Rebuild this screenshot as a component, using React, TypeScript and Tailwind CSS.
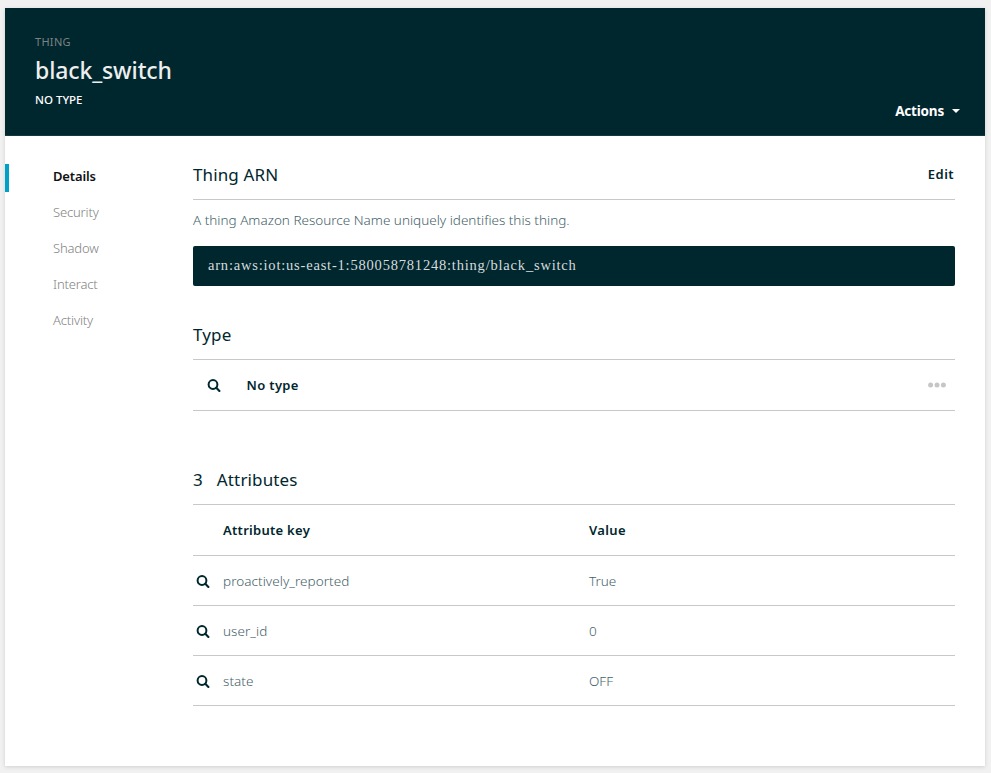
import type { ReactNode } from "react";

const navItems = ["Security", "Shadow", "Interact", "Activity"];

const attributes = [
  { key: "proactively_reported", value: "True" },
  { key: "user_id", value: "0" },
  { key: "state", value: "OFF" },
];

function SearchIcon() {
  return (
    <svg viewBox="0 0 14 13" className="block h-[13px] w-3.5" fill="none" stroke="currentColor">
      <circle cx="6" cy="5.5" r="4.4" strokeWidth="2" />
      <path d="M9.3 8.8 12.4 11.9" strokeWidth="2.1" strokeLinecap="round" />
    </svg>
  );
}

function SectionTitle({ children, action }: { children: ReactNode; action?: ReactNode }) {
  return (
    <div className="flex h-[50px] items-center justify-between border-b border-[#c8c8c8]">
      <h2 className="text-[17px] tracking-[0.13px]">{children}</h2>
      {action}
    </div>
  );
}

export default function App() {
  return (
    <div className="h-[773px] w-full bg-[#f1f1f1] pt-2 pr-1.5 pl-[5px] font-['Noto_Sans','Open_Sans',sans-serif] text-[#00262e]">
      <div className="h-[758px] bg-white shadow-[0_1px_4px_rgba(0,0,0,0.14)]">
        <header className="flex h-32 justify-between border-b border-[#16393f] bg-[#00262e] px-[30px] text-white">
          <div className="pt-[26px]">
            <div className="text-[11px] leading-4 tracking-[0.3px] text-[#7b8384]">THING</div>
            <h1 className="mt-[5px] text-[23px] leading-[30px] font-medium tracking-[-0.12px] text-[#eeeeee]">black_switch</h1>
            <div className="mt-[7px] text-[11.5px] leading-4 font-medium tracking-[0px]">NO TYPE</div>
          </div>
          <button className="mt-[93px] mr-[-5px] flex h-5 items-center text-[13.5px] font-bold tracking-[-0.2px]">
            Actions
            <svg viewBox="0 0 8 4" className="ml-2 h-1 w-2" fill="currentColor">
              <path d="M0 0h8L4 4z" />
            </svg>
          </button>
        </header>

        <div className="flex">
          <nav className="w-[188px] pt-7 text-[13px] tracking-[-0.15px]">
            <div className="flex h-7 items-center border-l-4 border-[#00a1c9] pb-[3px] pl-11 font-semibold text-[#111111]">Details</div>
            {navItems.map((item) => (
              <div key={item} className="mt-2 flex h-7 items-center pb-[3px] pl-12 font-light text-[#828282]">
                {item}
              </div>
            ))}
          </nav>

          <main className="w-[762px] pt-3.5">
            <SectionTitle action={<button className="mr-px text-[13px] font-semibold tracking-[0.45px]">Edit</button>}>Thing ARN</SectionTitle>
            <p className="mt-2.5 h-5 text-[13.5px] leading-5 font-light text-[#456269]">
              A thing Amazon Resource Name uniquely identifies this thing.
            </p>
            <div className="mt-4 flex h-10 items-center rounded-[2px] bg-[#00262e] px-[15px] font-['Liberation_Serif',serif] text-[14.5px] tracking-[0.8px] text-[#d5dcdc]">
              arn:aws:iot:us-east-1:580058781248:thing/black_switch
            </div>

            <section className="mt-6">
              <SectionTitle>Type</SectionTitle>
              <div className="flex h-[51px] items-center border-b border-[#c8c8c8] pr-[9px] pl-3.5">
                <SearchIcon />
                <span className="ml-[25.5px] pt-0.5 text-[13px] font-semibold tracking-[0.35px]">No type</span>
                <svg viewBox="0 0 18 6" className="ml-auto h-1.5 w-[18px]" fill="#c6c6c6">
                  <circle cx="2.6" cy="3" r="2.5" />
                  <circle cx="9" cy="3" r="2.5" />
                  <circle cx="15.4" cy="3" r="2.5" />
                </svg>
              </div>
            </section>

            <section className="mt-11">
              <SectionTitle>
                <span className="mr-3.5">3</span>Attributes
              </SectionTitle>
              <div className="flex h-[51px] items-center border-b border-[#c8c8c8] pt-0.5 pl-[30px] text-[13px] font-semibold tracking-[0.28px]">
                <div className="w-[366px]">Attribute key</div>
                <div className="tracking-[0.35px]">Value</div>
              </div>
              {attributes.map((row) => (
                <div key={row.key} className="flex h-[50px] items-center border-b border-[#c8c8c8] pt-0.5 text-[13.5px] font-light">
                  <div className="w-[30px] pl-[3px]">
                    <SearchIcon />
                  </div>
                  <div className="w-[366px] tracking-[0.05px] text-[#456269]">{row.key}</div>
                  <div className="text-[#456269]">{row.value}</div>
                </div>
              ))}
            </section>
          </main>
        </div>
      </div>
    </div>
  );
}
